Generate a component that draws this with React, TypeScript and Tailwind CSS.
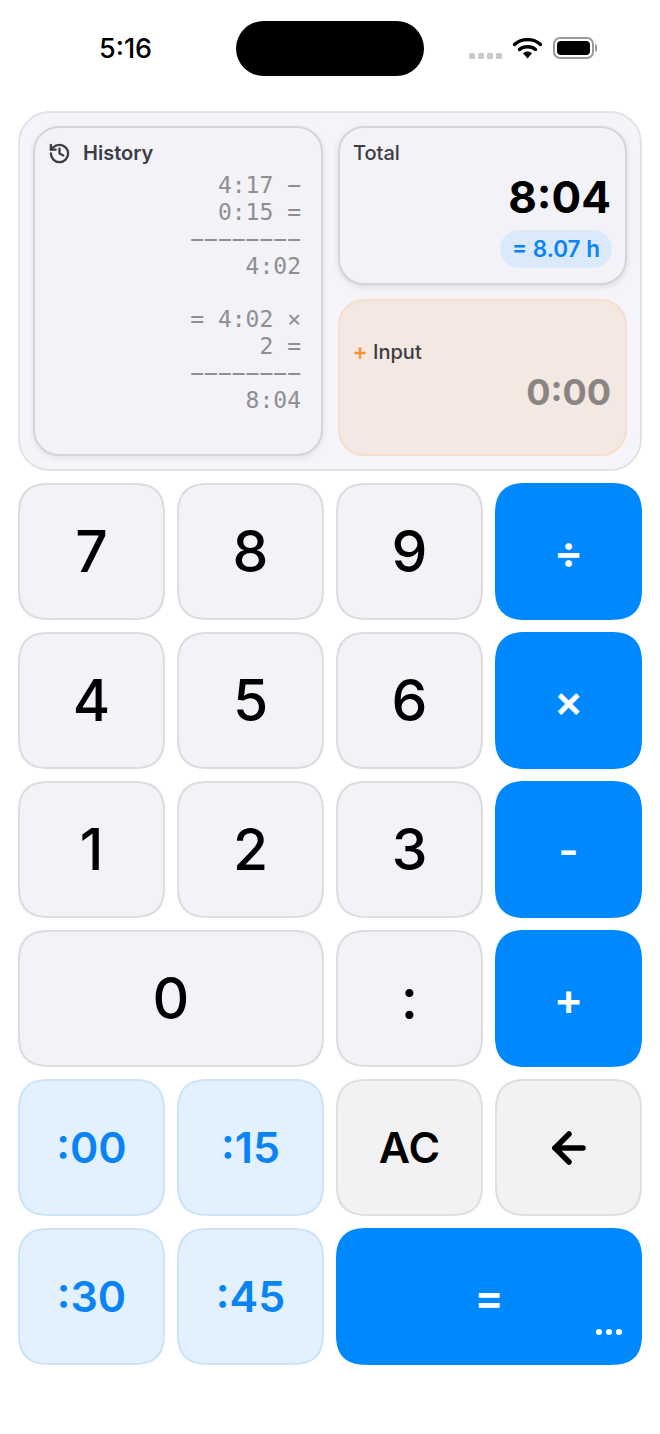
import { ArrowLeft, History, Plus } from 'lucide-react';

type Kind = 'digit' | 'op' | 'minute' | 'util';

const kindClass: Record<Kind, string> = {
  digit: 'bg-[#f2f2f7] border-2 border-[#dcdce1] text-black text-[57px] font-medium pt-[1px]',
  op: 'bg-[#0088ff] text-white text-[44px] font-semibold',
  minute: 'bg-[#e3f1fe] border-2 border-[#cde4f8] text-[#0a84f5] text-[43px] font-semibold',
  util: 'bg-[#f2f2f4] border-2 border-[#dfdfe2] text-black text-[43px] font-semibold',
};

function Key({ kind, wide, children }: { kind: Kind; wide?: boolean; children: React.ReactNode }) {
  return (
    <button className={`relative flex items-center justify-center rounded-[32px] [corner-shape:superellipse(1.4)] ${wide ? 'col-span-2' : ''} ${kindClass[kind]}`}>
      {children}
    </button>
  );
}

function StatusBar() {
  return (
    <div className="flex h-[111px] items-start pt-[21px]">
      <div className="flex h-[55px] w-[236px] items-center pl-[99px] pt-[2px] text-[27px] font-medium text-black">5:16</div>
      <div className="h-[55px] w-[188px] rounded-[28px] bg-black" />
      <div className="flex h-[55px] items-center pl-[45px]">
        <div className="mt-[14px] flex gap-[3px]">
          <span className="h-[6px] w-[6px] rounded-[1.5px] bg-[#c9c9c9]" />
          <span className="h-[6px] w-[6px] rounded-[1.5px] bg-[#c9c9c9]" />
          <span className="h-[6px] w-[6px] rounded-[1.5px] bg-[#c9c9c9]" />
          <span className="h-[6px] w-[6px] rounded-[1.5px] bg-[#c9c9c9]" />
        </div>
        <svg className="ml-[11px] -mt-[2px]" width="29" height="22" viewBox="0 0 29 22" fill="none">
          <path d="M1.5 7.5C8.5 1 20.5 1 27.5 7.5" stroke="#000" strokeWidth="3.4" strokeLinecap="round" />
          <path d="M6.5 12.5C10.5 8.8 18.5 8.8 22.5 12.5" stroke="#000" strokeWidth="3.4" strokeLinecap="round" />
          <path d="M10 16.2C12.5 14 16.5 14 19 16.2L14.5 21.5Z" fill="#000" />
        </svg>
        <div className="ml-[11px] -mt-[1px] flex items-center">
          <div className="h-[22px] w-[41px] rounded-[7px] border-2 border-[#9a9a9a] p-[2px]">
            <div className="h-full w-full rounded-[4px] bg-black" />
          </div>
          <div className="ml-[1px] h-[8px] w-[2px] rounded-r-sm bg-[#9a9a9a]" />
        </div>
      </div>
    </div>
  );
}

function Display() {
  return (
    <div className="mx-[18px] mb-3 grid h-[360px] grid-cols-[290px_289px] gap-x-[15px] rounded-[32px] border-2 border-[#e2e2e8] bg-[#f4f4fa] p-[13px]">
      <div className="rounded-[26px] border-2 border-[#d4d4d9] bg-[#f2f2f8] px-[13px] pt-[13px] shadow-[0_2px_6px_rgba(0,0,0,0.08)]">
        <div className="flex items-center gap-[12px] text-[20px] font-semibold leading-[24px] text-[#3c3c43]">
          <History size={23} strokeWidth={2.4} />
          History
        </div>
        <div className="whitespace-pre pr-[7px] pt-[7px] text-right font-['DejaVu_Sans_Mono',monospace] text-[23px] leading-[26.85px] text-[#8e8e93]">
          {'4:17 −\n0:15 =\n−−−−−−−−\n4:02\n\n= 4:02 ×\n2 =\n−−−−−−−−\n8:04'}
        </div>
      </div>
      <div className="flex flex-col gap-[14px]">
        <div className="flex h-[159px] flex-col rounded-[26px] border-2 border-[#d4d4d9] bg-[#f2f2f8] pl-[13px] pr-[14px] pt-[13px] shadow-[0_2px_6px_rgba(0,0,0,0.1)]">
          <div className="text-[20px] font-medium leading-[24px] text-[#3c3c43]">Total</div>
          <div className="mt-[4px] text-right text-[44px] font-bold leading-[56px] text-black">8:04</div>
          <div className="-mr-[1px] mt-[5px] self-end rounded-full bg-[#dbeafa] px-[12px] text-[22.5px] font-semibold leading-[38px] text-[#0a84f5]">= 8.07 h</div>
        </div>
        <div className="flex h-[157px] flex-col justify-center rounded-[26px] border-2 border-[#f5dfcc] bg-[#f3e8e2] pl-[13px] pr-[14px]">
          <div className="flex items-center gap-[5px] text-[20px] font-medium leading-[24px] text-[#3c3c43]">
            <Plus size={16} strokeWidth={3.6} className="-ml-[1px] mt-[2px] text-[#ff9030]" />
            Input
          </div>
          <div className="mt-[5px] text-right text-[36px] font-bold leading-[46px] text-[#8a8583]">0:00</div>
        </div>
      </div>
    </div>
  );
}

export default function App() {
  return (
    <div className="h-[1434px] w-[660px] bg-white font-['Inter',sans-serif]">
      <StatusBar />
      <Display />
      <div className="grid grid-cols-4 auto-rows-[137px] gap-3 px-[18px]">
        <Key kind="digit">7</Key>
        <Key kind="digit">8</Key>
        <Key kind="digit">9</Key>
        <Key kind="op">÷</Key>
        <Key kind="digit">4</Key>
        <Key kind="digit">5</Key>
        <Key kind="digit">6</Key>
        <Key kind="op">×</Key>
        <Key kind="digit">1</Key>
        <Key kind="digit">2</Key>
        <Key kind="digit">3</Key>
        <Key kind="op">-</Key>
        <Key kind="digit" wide>0</Key>
        <Key kind="digit">:</Key>
        <Key kind="op">+</Key>
        <Key kind="minute">:00</Key>
        <Key kind="minute">:15</Key>
        <Key kind="util">AC</Key>
        <Key kind="util"><ArrowLeft size={48} strokeWidth={2.75} /></Key>
        <Key kind="minute">:30</Key>
        <Key kind="minute">:45</Key>
        <Key kind="op" wide>
          =
          <span className="absolute bottom-[30px] right-[20px] flex gap-[4px]">
            <span className="h-[6px] w-[6px] rounded-full bg-white" />
            <span className="h-[6px] w-[6px] rounded-full bg-white" />
            <span className="h-[6px] w-[6px] rounded-full bg-white" />
          </span>
        </Key>
      </div>
    </div>
  );
}
